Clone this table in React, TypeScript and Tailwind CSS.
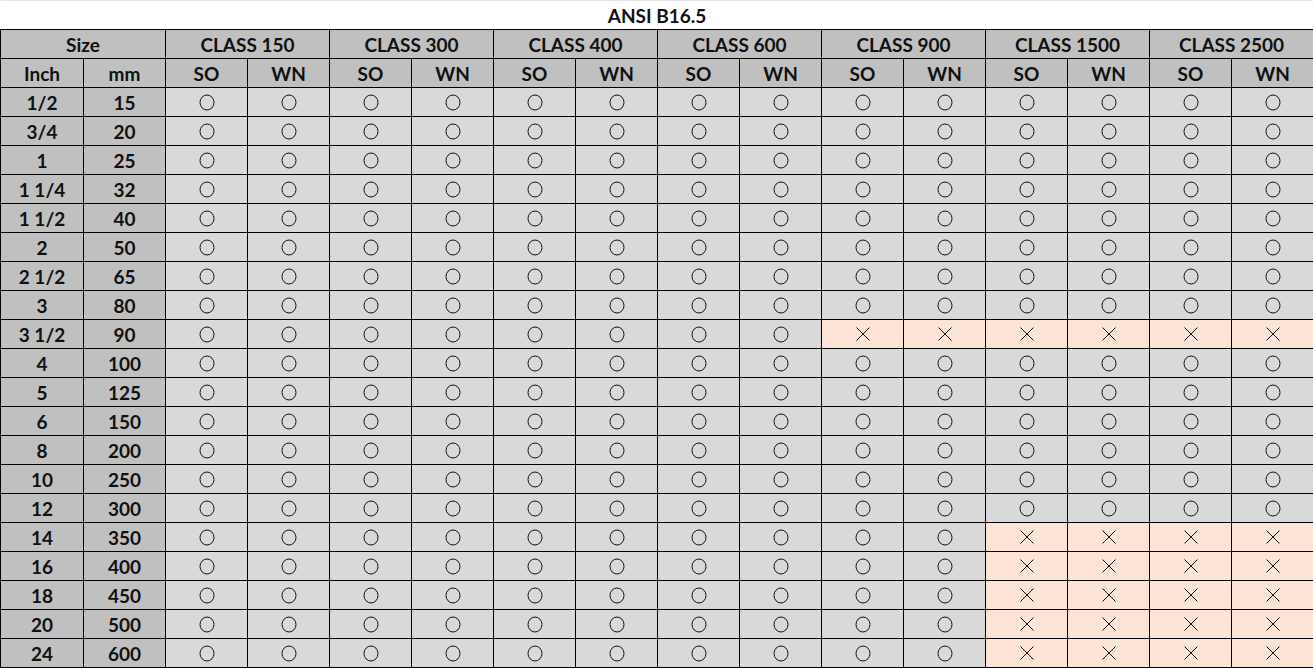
const classes = ['CLASS 150', 'CLASS 300', 'CLASS 400', 'CLASS 600', 'CLASS 900', 'CLASS 1500', 'CLASS 2500'];

const sizes: [string, string][] = [
  ['1/2', '15'],
  ['3/4', '20'],
  ['1', '25'],
  ['1 1/4', '32'],
  ['1 1/2', '40'],
  ['2', '50'],
  ['2 1/2', '65'],
  ['3', '80'],
  ['3 1/2', '90'],
  ['4', '100'],
  ['5', '125'],
  ['6', '150'],
  ['8', '200'],
  ['10', '250'],
  ['12', '300'],
  ['14', '350'],
  ['16', '400'],
  ['18', '450'],
  ['20', '500'],
  ['24', '600'],
];

// returns true when the flange is not available
function isNo(row: number, col: number) {
  if (sizes[row][0] === '3 1/2' && col >= 8) return true;
  if (row >= 15 && col >= 10) return true;
  return false;
}

function Circle() {
  return (
    <svg width="16" height="17" viewBox="0 0 16 17" className="mx-auto block">
      <ellipse cx="8" cy="8.5" rx="7" ry="7.5" fill="none" stroke="#111" strokeWidth="1" />
    </svg>
  );
}

function Cross() {
  return (
    <svg width="16" height="16" viewBox="0 0 16 16" className="mx-auto block">
      <path d="M1.5 1.5 L14.5 14.5 M14.5 1.5 L1.5 14.5" stroke="#111" strokeWidth="1" fill="none" />
    </svg>
  );
}

const cell = 'border border-black h-[29px] p-0 text-center align-middle';

export default function App() {
  return (
    <div className="w-[1313px] h-[668px] bg-white overflow-hidden" style={{ fontFamily: 'Lato, "Open Sans", sans-serif' }}>
      <table className="w-[1313px] table-fixed border-collapse text-[19px] font-bold text-[#111] leading-none">
        <colgroup>
          <col className="w-[83px]" />
          <col className="w-[82px]" />
          {Array.from({ length: 14 }).map((_, i) => (
            <col key={i} className="w-[82px]" />
          ))}
        </colgroup>
        <tbody>
          <tr>
            <td colSpan={16} className="h-[29px] p-0 text-center align-middle border-t border-t-[#e5e5e5] border-b border-black">
              ANSI B16.5
            </td>
          </tr>
          <tr className="bg-[#c0c0c0]">
            <td colSpan={2} className={cell}>Size</td>
            {classes.map((c) => (
              <td key={c} colSpan={2} className={cell}>{c}</td>
            ))}
          </tr>
          <tr className="bg-[#c0c0c0]">
            <td className={cell}>Inch</td>
            <td className={cell}>mm</td>
            {classes.map((c) => [
              <td key={c + 'so'} className={cell}>SO</td>,
              <td key={c + 'wn'} className={cell}>WN</td>,
            ])}
          </tr>
          {sizes.map(([inch, mm], r) => (
            <tr key={inch}>
              <td className={`${cell} bg-[#c0c0c0]`}>{inch}</td>
              <td className={`${cell} bg-[#c0c0c0]`}>{mm}</td>
              {Array.from({ length: 14 }).map((_, c) => {
                const no = isNo(r, c);
                return (
                  <td key={c} className={`${cell} ${no ? 'bg-[#fce4d6]' : 'bg-[#d9d9d9]'}`}>
                    {no ? <Cross /> : <Circle />}
                  </td>
                );
              })}
            </tr>
          ))}
        </tbody>
      </table>
    </div>
  );
}
